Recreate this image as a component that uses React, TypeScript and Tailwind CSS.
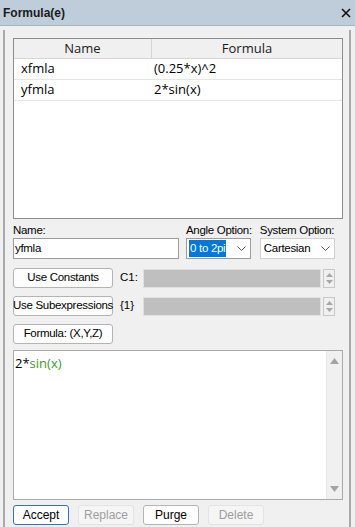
import React from "react";

const font = { fontFamily: '"Liberation Sans", Arial, sans-serif' };
const listFont = { fontFamily: '"Open Sans", "Noto Sans", sans-serif' };

// small spin box next to the gray fields
const Spinner = () => (
  <div className="flex h-[19px] w-[12px] flex-col items-center justify-center gap-[3px] border border-[#c8c8c8] bg-[#f0f0f0]">
    <svg width="7" height="4" viewBox="0 0 7 4">
      <path d="M0 4 L3.5 0 L7 4 Z" fill="#a8a8a8" />
    </svg>
    <svg width="7" height="4" viewBox="0 0 7 4">
      <path d="M0 0 L3.5 4 L7 0 Z" fill="#a8a8a8" />
    </svg>
  </div>
);

const Chevron = () => (
  <svg width="9" height="6" viewBox="0 0 9 6" className="shrink-0">
    <path d="M0.5 0.5 L4.5 4.5 L8.5 0.5" stroke="#555" strokeWidth="1" fill="none" />
  </svg>
);

const SideButton = ({ label }: { label: string }) => (
  <button className="flex h-[20px] w-[100px] shrink-0 items-center justify-center whitespace-nowrap rounded-[3px] border border-[#b4b4b4] bg-[#fdfdfd] px-0 text-[11.5px] tracking-[-0.3px] text-black">
    {label}
  </button>
);

const BottomButton = ({ label, primary, disabled }: { label: string; primary?: boolean; disabled?: boolean }) => {
  let cls = "border-[#b4b4b4] bg-[#fdfdfd] text-black";
  if (primary) cls = "border-[#2f75b5] bg-[#fdfdfd] text-black";
  if (disabled) cls = "border-[#e3e3e3] bg-[#f5f5f5] text-[#9e9e9e]";
  return (
    <button className={`flex h-[20px] w-[56px] items-center justify-center rounded-[3px] border text-[12px] ${cls}`}>{label}</button>
  );
};

export default function App() {
  const rows = [
    { name: "xfmla", formula: "(0.25*x)^2" },
    { name: "yfmla", formula: "2*sin(x)" },
  ];

  return (
    <div className="flex h-[527px] w-[355px] flex-col overflow-hidden bg-[#f0f0f0]" style={font}>
      {/* title bar */}
      <div className="flex h-[26px] shrink-0 items-center justify-between border-b border-[#a8b4c0] bg-[#bfcddb] pl-[3px] pr-[4px]">
        <span className="text-[12px] font-bold text-[#1a1a1a]">Formula(e)</span>
        <svg width="10" height="10" viewBox="0 0 10 10">
          <path d="M1 1 L9 9 M9 1 L1 9" stroke="#111" strokeWidth="1.6" />
        </svg>
      </div>

      <div className="ml-[3px] mr-[4px] mt-[4px] flex flex-1 flex-col border-l-2 border-r-2 border-[#a9a9a9] pl-[8px] pr-[6px] pt-[8px]">
        {/* formula list */}
        <div className="h-[181px] shrink-0 border border-[#8d8d8d] bg-white">
          <div className="flex h-[20px] border-b border-[#d5d5d5] bg-[#f0f0f0] text-[13px] text-[#1a1a1a]" style={listFont}>
            <div className="flex w-[138px] items-center justify-center border-r border-[#d5d5d5]">Name</div>
            <div className="flex flex-1 items-center justify-center">Formula</div>
          </div>
          {rows.map((r) => (
            <div key={r.name} className="flex h-[21px] items-center border-b border-[#e6e6e6] text-[13px] text-black" style={listFont}>
              <div className="w-[139px] pl-[7px]">{r.name}</div>
              <div className="flex-1 pl-[1px]">{r.formula}</div>
            </div>
          ))}
        </div>

        {/* name and options */}
        <div className="mt-[4px] flex items-end whitespace-nowrap text-[11.5px] tracking-[-0.3px] text-black">
          <div className="flex w-[166px] flex-col">
            <span className="leading-[14px]">Name:</span>
            <div className="mt-[1px] flex h-[21px] items-center border border-[#9c9c9c] bg-white pl-[1px]">yfmla</div>
          </div>
          <div className="ml-[7px] flex flex-col">
            <span className="leading-[14px]">Angle Option:</span>
            <div className="mt-[1px] flex h-[21px] w-[65px] items-center justify-between border border-[#9c9c9c] bg-white pl-[2px] pr-[4px]">
              <span className="bg-[#0078d7] px-[1px] text-white">0 to 2pi</span>
              <Chevron />
            </div>
          </div>
          <div className="ml-[8px] flex flex-col">
            <span className="leading-[14px]">System Option:</span>
            <div className="mt-[1px] flex h-[21px] w-[75px] items-center justify-between border border-[#d0d0d0] bg-white pl-[3px] pr-[4px]">
              <span>Cartesian</span>
              <Chevron />
            </div>
          </div>
        </div>

        {/* constants */}
        <div className="mt-[9px] flex items-center whitespace-nowrap text-[11.5px] text-black">
          <SideButton label="Use Constants" />
          <span className="ml-[7px] w-[23px]">C1:</span>
          <div className="h-[19px] w-[178px] border border-[#e0e0e0] bg-[#bfbfbf]" />
          <div className="ml-[2px]">
            <Spinner />
          </div>
        </div>

        <div className="mt-[8px] flex items-center whitespace-nowrap text-[11.5px] text-black">
          <SideButton label="Use Subexpressions" />
          <span className="ml-[7px] w-[23px]">{"{1}"}</span>
          <div className="h-[19px] w-[178px] border border-[#e0e0e0] bg-[#bfbfbf]" />
          <div className="ml-[2px]">
            <Spinner />
          </div>
        </div>

        <div className="mt-[8px] flex">
          <SideButton label="Formula: (X,Y,Z)" />
        </div>

        {/* formula editor */}
        <div className="mt-[6px] flex h-[150px] shrink-0 border border-[#a9a9a9] bg-white">
          <div className="flex-1 pl-[1px] pt-[3px] text-[13px]" style={listFont}>
            <span className="text-black">2*</span>
            <span className="text-[#3f9a2f]">sin(x)</span>
          </div>
          <div className="flex w-[16px] flex-col items-center justify-between border-l border-[#e8e8e8] bg-[#f0f0f0] py-[7px]">
            <svg width="9" height="6" viewBox="0 0 9 6">
              <path d="M0 6 L4.5 0 L9 6 Z" fill="#a3a3a3" />
            </svg>
            <svg width="9" height="6" viewBox="0 0 9 6">
              <path d="M0 0 L4.5 6 L9 0 Z" fill="#a3a3a3" />
            </svg>
          </div>
        </div>

        {/* actions */}
        <div className="mt-[5px] flex gap-[9px]">
          <BottomButton label="Accept" primary />
          <BottomButton label="Replace" disabled />
          <BottomButton label="Purge" />
          <BottomButton label="Delete" disabled />
        </div>
      </div>
    </div>
  );
}
